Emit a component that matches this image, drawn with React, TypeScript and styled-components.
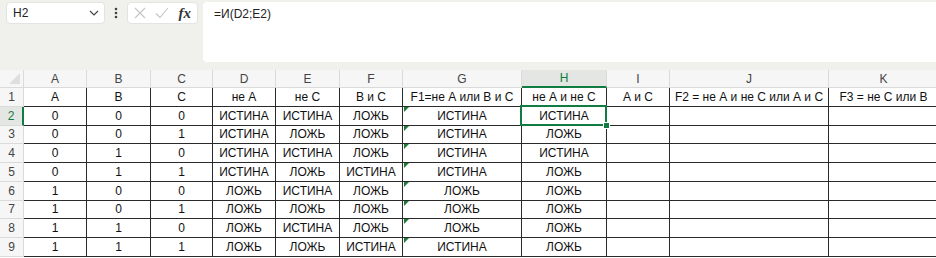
import styled, { createGlobalStyle, css } from "styled-components";

const GlobalStyle = createGlobalStyle`
  html, body {
    margin: 0;
    padding: 0;
    background: #ffffff;
    font-family: "Liberation Sans", Arial, sans-serif;
  }
`;

const Page = styled.div`
  width: 936px;
  height: 258px;
  overflow: hidden;
  background: #fff;
`;

const FormulaArea = styled.div`
  height: 70px;
  box-sizing: border-box;
  background: #f0f1ed;
  display: flex;
  align-items: flex-start;
  padding: 2px 0 0 6px;
`;

const NameBox = styled.div`
  width: 99px;
  height: 22px;
  box-sizing: border-box;
  background: #fff;
  border: 1px solid #e3e4e0;
  border-radius: 4px;
  display: flex;
  align-items: center;
  justify-content: space-between;
  padding: 0 5px 0 6px;
  font-size: 12px;
  color: #222;
`;

const Dots = styled.div`
  width: 22px;
  height: 22px;
  display: flex;
  align-items: center;
  justify-content: center;
`;

const FxBox = styled.div`
  width: 71px;
  height: 22px;
  box-sizing: border-box;
  background: #fff;
  border: 1px solid #e3e4e0;
  border-radius: 4px;
  display: flex;
  align-items: center;
  justify-content: space-between;
  padding: 0 6px 0 6px;
`;

const Fx = styled.span`
  font-family: "Liberation Serif", "Times New Roman", serif;
  font-style: italic;
  font-size: 15px;
  font-weight: bold;
  color: #333;
`;

const FormulaInput = styled.div`
  flex: 1;
  margin-left: 5px;
  height: 60px;
  box-sizing: border-box;
  background: #fff;
  border-radius: 4px 0 0 4px;
  padding: 5px 0 0 11px;
  font-size: 12px;
  color: #222;
`;

const COLS = [24, 63, 64, 62, 63, 64, 63, 119, 85, 63, 159, 110];

const Grid = styled.div`
  display: grid;
  grid-template-columns: ${COLS.map((w) => `${w}px`).join(" ")};
  grid-template-rows: 18px repeat(9, 18.75px);
`;

const Corner = styled.div`
  background: #f6f6f6;
  border-right: 1px solid #dadada;
  border-bottom: 1px solid #dadada;
  position: relative;
  overflow: hidden;
  &::after {
    content: "";
    position: absolute;
    right: 3px;
    bottom: 3px;
    border-style: solid;
    border-width: 0 0 11px 11px;
    border-color: transparent transparent #dedede transparent;
  }
`;

const ColHead = styled.div<{ $active?: boolean }>`
  background: ${(p) => (p.$active ? "#e4e6e3" : "#f6f6f6")};
  color: ${(p) => (p.$active ? "#107c41" : "#444")};
  border-right: 1px solid #dadada;
  border-bottom: ${(p) => (p.$active ? "2px solid #107c41" : "1px solid #dadada")};
  font-size: 12px;
  display: flex;
  align-items: center;
  justify-content: center;
  box-sizing: border-box;
`;

const RowHead = styled.div<{ $active?: boolean }>`
  background: ${(p) => (p.$active ? "#e4e6e3" : "#f6f6f6")};
  color: ${(p) => (p.$active ? "#107c41" : "#444")};
  border-right: ${(p) => (p.$active ? "2px solid #107c41" : "1px solid #dadada")};
  border-bottom: 1px solid #dadada;
  font-size: 12px;
  display: flex;
  align-items: center;
  justify-content: center;
  box-sizing: border-box;
`;

const Cell = styled.div<{ $flag?: boolean; $selected?: boolean }>`
  position: relative;
  box-sizing: border-box;
  border-right: 1px solid #2a2a2a;
  border-bottom: 1px solid #2a2a2a;
  font-size: 12px;
  color: #111;
  display: flex;
  align-items: center;
  justify-content: center;
  white-space: nowrap;
  overflow: visible;
  ${(p) =>
    p.$flag &&
    css`
      &::before {
        content: "";
        position: absolute;
        left: 1px;
        top: 0;
        border-style: solid;
        border-width: 5px 5px 0 0;
        border-color: #1f7a36 transparent transparent transparent;
      }
    `}
  ${(p) =>
    p.$selected &&
    css`
      &::after {
        content: "";
        position: absolute;
        left: -2px;
        top: -2px;
        right: -1px;
        bottom: -1px;
        border: 2px solid #107c41;
        z-index: 2;
      }
    `}
`;

const Handle = styled.span`
  position: absolute;
  right: -4px;
  bottom: -4px;
  width: 5px;
  height: 5px;
  background: #107c41;
  border: 1px solid #fff;
  z-index: 3;
`;

const letters = ["A", "B", "C", "D", "E", "F", "G", "H", "I", "J", "K"];

const T = "ИСТИНА";
const F = "ЛОЖЬ";

const rows: string[][] = [
  ["А", "В", "С", "не А", "не С", "В и С", "F1=не А или В и С", "не А и не С", "А и С", "F2 = не А и не С или А и С", "F3 = не С или В"],
  ["0", "0", "0", T, T, F, T, T, "", "", ""],
  ["0", "0", "1", T, F, F, T, F, "", "", ""],
  ["0", "1", "0", T, T, F, T, T, "", "", ""],
  ["0", "1", "1", T, F, T, T, F, "", "", ""],
  ["1", "0", "0", F, T, F, F, F, "", "", ""],
  ["1", "0", "1", F, F, F, F, F, "", "", ""],
  ["1", "1", "0", F, T, F, F, F, "", "", ""],
  ["1", "1", "1", F, F, T, T, F, "", "", ""],
];

export default function App() {
  return (
    <Page>
      <GlobalStyle />
      <FormulaArea>
        <NameBox>
          <span>H2</span>
          <svg width="10" height="6" viewBox="0 0 10 6">
            <path d="M1 1l4 4 4-4" fill="none" stroke="#444" strokeWidth="1.2" />
          </svg>
        </NameBox>
        <Dots>
          <svg width="4" height="12" viewBox="0 0 4 12">
            <circle cx="2" cy="2" r="1.3" fill="#444" />
            <circle cx="2" cy="6" r="1.3" fill="#444" />
            <circle cx="2" cy="10" r="1.3" fill="#444" />
          </svg>
        </Dots>
        <FxBox>
          <svg width="12" height="12" viewBox="0 0 12 12">
            <path d="M1 1l10 10M11 1L1 11" stroke="#c4c4c4" strokeWidth="1.1" />
          </svg>
          <svg width="14" height="12" viewBox="0 0 14 12">
            <path d="M1 6.5l4 4L13 1" fill="none" stroke="#c4c4c4" strokeWidth="1.1" />
          </svg>
          <Fx>fx</Fx>
        </FxBox>
        <FormulaInput>=И(D2;E2)</FormulaInput>
      </FormulaArea>
      <Grid>
        <Corner />
        {letters.map((l) => (
          <ColHead key={l} $active={l === "H"}>
            {l}
          </ColHead>
        ))}
        {rows.map((row, r) => (
          <Row key={r} index={r} cells={row} />
        ))}
      </Grid>
    </Page>
  );
}

function Row({ index, cells }: { index: number; cells: string[] }) {
  const rowNum = index + 1;
  return (
    <>
      <RowHead $active={rowNum === 2}>{rowNum}</RowHead>
      {cells.map((v, c) => {
        const selected = rowNum === 2 && c === 7;
        return (
          <Cell key={c} $flag={c === 6 && rowNum > 1} $selected={selected}>
            {v}
            {selected && <Handle />}
          </Cell>
        );
      })}
    </>
  );
}
